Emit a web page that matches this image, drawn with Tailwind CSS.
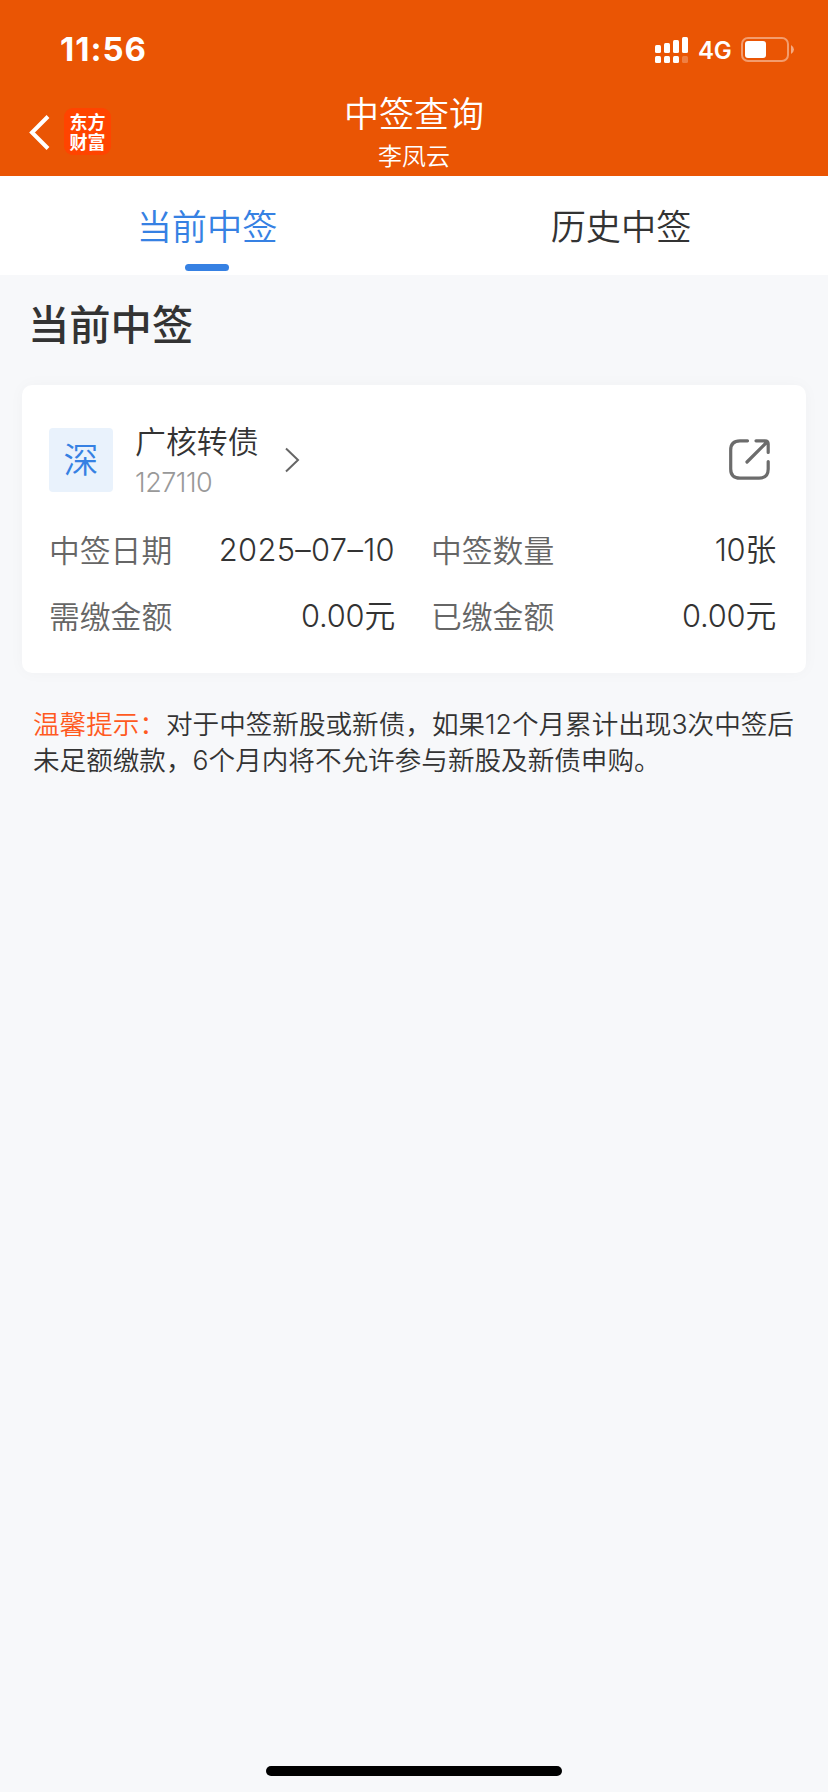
<!DOCTYPE html>
<html lang="zh-CN">
<head>
<meta charset="utf-8">
<title>中签查询</title>
<script src="https://cdn.jsdelivr.net/npm/@tailwindcss/browser@4"></script>
</head>
<body class="w-[828px] h-[1792px] bg-[#f7f8fa] font-['Noto_Sans_CJK_SC',sans-serif] text-[#333] flex flex-col overflow-hidden">
  <header class="h-[176px] shrink-0 bg-[#ea5504] text-white flex flex-col">
    <div class="h-[88px] flex items-start justify-between pl-[60px] pr-[34px]">
      <div class="mt-[29px] font-['Inter',sans-serif] font-bold text-[33px] leading-[40px] tracking-[1px]">11:56</div>
      <div class="flex items-start">
        <svg class="mt-[37px]" width="34" height="26" fill="#fff">
          <rect x="0" y="8" width="6" height="8" rx="1.5"/><rect x="9" y="6" width="6" height="10" rx="1.5"/><rect x="18" y="3" width="6" height="13" rx="1.5"/><rect x="27" y="0" width="6" height="16" rx="1.5"/>
          <rect x="0" y="19" width="6" height="7" rx="1.5"/><rect x="9" y="19" width="6" height="7" rx="1.5"/><rect x="18" y="19" width="6" height="7" rx="1.5"/><rect x="27" y="19" width="6" height="7" rx="1.5" opacity=".25"/>
        </svg>
        <div class="ml-[9px] mt-[36px] w-[33px] font-['Inter',sans-serif] font-semibold text-[24px] leading-[30px] tracking-[-0.2px]">4G</div>
        <svg class="ml-[10px] mt-[37px]" width="53" height="25">
          <rect x="1" y="1" width="46" height="23" rx="6" fill="none" stroke="#fff" stroke-opacity=".42" stroke-width="2"/>
          <rect x="4" y="4" width="21" height="17" rx="3" fill="#fff"/>
          <path d="M50 8 Q53 10 53 12.5 T50 17Z" fill="#fff" fill-opacity=".5"/>
        </svg>
      </div>
    </div>
    <div class="h-[88px] grid grid-cols-3">
      <div class="flex items-start pl-[28px] pt-[20px]">
        <svg class="mt-[6px]" width="24" height="38" fill="none" stroke="#fff" stroke-width="4"><path d="M20 2.500 4 18.500 20 34.500"/></svg>
        <div class="ml-[12px] size-[47px] rounded-[9px] bg-[#ff4400] pt-[3px] text-center font-bold text-[18px] leading-[20px]">东方<br>财富</div>
      </div>
      <div class="flex flex-col items-center">
        <h1 class="mt-[2px] text-[35px] leading-[44px] font-[350]">中签查询</h1>
        <div class="mt-[5px] text-[24px] leading-[32px] font-[350]">李凤云</div>
      </div>
    </div>
  </header>
  <nav class="h-[99px] shrink-0 bg-white grid grid-cols-2 text-[35.200px] leading-[44px] font-[350]">
    <div class="flex flex-col items-center pt-[27px] text-[#3681e3]"><span>当前中签</span><i class="mt-[17px] w-[44px] h-[7px] rounded-full bg-[#3681e3]"></i></div>
    <div class="flex flex-col items-center pt-[27px]"><span>历史中签</span></div>
  </nav>
  <main class="grow">
    <h2 class="pl-[28px] pt-[20px] text-[41.300px] leading-[54px] font-medium">当前中签</h2>
    <section class="mx-[22px] mt-[36px] h-[288px] rounded-[10px] bg-white shadow-[0_0_16px_rgba(0,0,0,0.03)] pl-[27px] pr-[30px] pt-[36px]">
      <div class="flex items-start">
        <div class="mt-[7px] size-[64px] rounded-[4px] bg-[#e9f2fc] text-[#3681e3] text-[35px] leading-[60px] text-center font-[350]">深</div>
        <div class="ml-[22px]">
          <div class="text-[30.900px] leading-[37px] font-[350]">广核转债</div>
          <div class="mt-[8px] font-['Inter',sans-serif] font-[350] text-[27px] leading-[34px] tracking-[-0.500px] text-[#999]">127110</div>
        </div>
        <svg class="ml-[25px] mt-[26px]" width="18" height="26" fill="none" stroke="#666" stroke-width="2"><path d="M2 1.500 14 13 2 24.500"/></svg>
        <svg class="ml-auto mr-[5px] mt-[18px]" width="42" height="42" fill="none" stroke="#6c6c6c" stroke-width="3.2" stroke-linecap="round" stroke-linejoin="round">
          <path d="M18.500 1.800H11Q1.700 1.800 1.700 11V30Q1.700 39.200 11 39.200H30Q39.200 39.200 39.200 30V22.500M27 1.800H36Q39.200 1.800 39.200 5V13.500M38 3 18 23"/>
        </svg>
      </div>
      <div class="mt-[27px] grid grid-cols-[346px_345px] gap-x-[36px] gap-y-[21px] text-[30.800px] leading-[44px] font-[350]">
        <div class="flex justify-between"><span class="text-[#666]">中签日期</span><span class="pt-px font-['Inter','Noto_Sans_CJK_SC',sans-serif] tracking-[0.350px]">2025–07–10</span></div>
        <div class="flex justify-between"><span class="text-[#666]">中签数量</span><span class="pt-px font-['Inter','Noto_Sans_CJK_SC',sans-serif] tracking-[-0.200px]">10张</span></div>
        <div class="flex justify-between"><span class="text-[#666]">需缴金额</span><span class="pt-px font-['Inter','Noto_Sans_CJK_SC',sans-serif] tracking-[-0.200px]">0.00元</span></div>
        <div class="flex justify-between"><span class="text-[#666]">已缴金额</span><span class="pt-px font-['Inter','Noto_Sans_CJK_SC',sans-serif] tracking-[-0.200px]">0.00元</span></div>
      </div>
    </section>
    <p class="pl-[33px] mt-[32px] text-[26.600px] leading-[36px] whitespace-nowrap font-[350]"><span class="text-[#ff5a1f]">温馨提示：</span>对于中签新股或新债，如果<span class="font-['Inter',sans-serif] leading-none">12</span>个月累计出现<span class="font-['Inter',sans-serif] leading-none">3</span>次中签后<br>未足额缴款，<span class="font-['Inter',sans-serif] leading-none">6</span>个月内将不允许参与新股及新债申购。</p>
  </main>
  <div class="mx-auto mb-[16px] w-[296px] h-[10px] rounded-full bg-black"></div>
</body>
</html>
